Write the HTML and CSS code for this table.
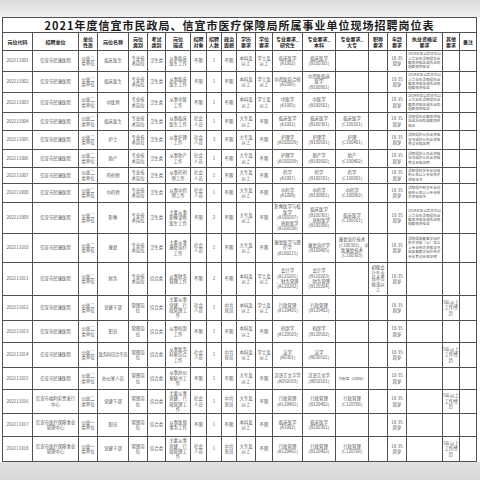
FILE: index.html
```html
<!DOCTYPE html>
<html lang="zh-CN">
<head>
<meta charset="utf-8">
<title>招聘岗位表</title>
<link rel="stylesheet" href="styles.css">
</head>
<body>
<div class="page">
  <div class="top"></div>
  <table class="sheet">
    <colgroup>
      <col class="c30"><col class="c46"><col class="c19"><col class="c31"><col class="c19"><col class="c18"><col class="c25"><col class="c16"><col class="c15"><col class="c15"><col class="c19"><col class="c17"><col class="c30"><col class="c33"><col class="c33"><col class="c19"><col class="c19"><col class="c36"><col class="c17"><col class="c17">
    </colgroup>
    <tr class="h15"><td class="title" colspan="20">2021年度信宜市民政局、信宜市医疗保障局所属事业单位现场招聘岗位表</td></tr>
    <tr class="h18 head">
      <th>岗位代码</th><th>招聘单位</th><th>单位<br>性质</th><th>岗位名称</th><th>岗位<br>类别</th><th>考试<br>类别</th><th>岗位<br>描述</th><th>招聘<br>对象</th><th>招聘<br>人数</th><th>政治<br>面貌</th><th>学历<br>要求</th><th>学位<br>要求</th><th>专业要求_<br>研究生</th><th>专业要求_<br>本科</th><th>专业要求_<br>大专</th><th>职称<br>要求</th><th>年龄<br>要求</th><th>执业资格证<br>要求</th><th>其他<br>要求</th><th>备注</th>
    </tr>
    <tr class="h21">
      <td>202111001</td><td>信宜市民康医院</td><td>公益二<br>类单位</td><td>临床医生</td><td>专业技<br>术岗位</td><td>卫生类</td><td>从事临床<br>医生工作</td><td>不限</td><td>1</td><td>不限</td><td>本科及<br>以上</td><td>学士及<br>以上</td><td>临床医学<br>（A1002）</td><td>临床医学<br>（B100301）</td><td></td><td></td><td>18-35<br>周岁</td><td class="lic">2019年及以后本科以<br>上毕业生须取得执业<br>医师资格证或执业助<br>理医师资格证</td><td></td><td></td>
    </tr>
    <tr class="h21">
      <td>202111002</td><td>信宜市民康医院</td><td>公益二<br>类单位</td><td>临床医生</td><td>专业技<br>术岗位</td><td>卫生类</td><td>从事临床<br>医生工作</td><td>不限</td><td>1</td><td>不限</td><td>本科及<br>以上</td><td>学士及<br>以上</td><td>中西医结合硕<br>（A1006）</td><td>中西医临床<br>医学<br>（B100901）</td><td></td><td></td><td>18-35<br>周岁</td><td class="lic">2019年及以后本科以<br>上毕业生须取得执业<br>医师资格证或执业助<br>理医师资格证</td><td></td><td></td>
    </tr>
    <tr class="h20">
      <td>202111003</td><td>信宜市民康医院</td><td>公益二<br>类单位</td><td>中医师</td><td>专业技<br>术岗位</td><td>卫生类</td><td>从事中医<br>工作</td><td>不限</td><td>1</td><td>不限</td><td>本科及<br>以上</td><td>学士及<br>以上</td><td>中医学<br>（A1005）</td><td>中医学<br>（B100501）</td><td></td><td></td><td>18-35<br>周岁</td><td class="lic">2019年及以后本科以<br>上毕业生须取得执业<br>医师资格证或执业助<br>理医师资格证</td><td></td><td></td>
    </tr>
    <tr class="h18">
      <td>202111004</td><td>信宜市民康医院</td><td>公益二<br>类单位</td><td>临床医生</td><td>专业技<br>术岗位</td><td>卫生类</td><td>从事临床<br>医生工作</td><td>社会<br>人员</td><td>1</td><td>不限</td><td>大专及<br>以上</td><td>不限</td><td>临床医学<br>（A1002）</td><td>临床医学<br>（B100301）</td><td>临床医学<br>（C100101）</td><td></td><td>18-35<br>周岁</td><td class="lic">须取得执业医师资格<br>证或执业助理医师资<br>格证</td><td></td><td></td>
    </tr>
    <tr class="h19">
      <td>202111005</td><td>信宜市民康医院</td><td>公益二<br>类单位</td><td>护士</td><td>专业技<br>术岗位</td><td>卫生类</td><td>从事护理<br>工作</td><td>社会<br>人员</td><td>3</td><td>不限</td><td>大专及<br>以上</td><td>不限</td><td>护理学<br>（A100209）</td><td>护理学<br>（B100501）</td><td>护理<br>（C100401）</td><td></td><td>18-35<br>周岁</td><td class="lic">须取得护士执业资格<br>证书或护士执业资格<br>考试合格证明</td><td></td><td></td>
    </tr>
    <tr class="h18">
      <td>202111006</td><td>信宜市民康医院</td><td>公益二<br>类单位</td><td>助产</td><td>专业技<br>术岗位</td><td>卫生类</td><td>从事助产<br>工作</td><td>社会<br>人员</td><td>1</td><td>不限</td><td>大专及<br>以上</td><td>不限</td><td>护理学<br>（A100209）</td><td>助产学<br>（B100502）</td><td>助产<br>（C100402）</td><td></td><td>18-35<br>周岁</td><td class="lic">须取得护士执业资格<br>证书或护士执业资格<br>考试合格证明</td><td></td><td></td>
    </tr>
    <tr class="h16">
      <td>202111007</td><td>信宜市民康医院</td><td>公益二<br>类单位</td><td>药剂师</td><td>专业技<br>术岗位</td><td>卫生类</td><td>从事药剂<br>师工作</td><td>社会<br>人员</td><td>1</td><td>不限</td><td>大专及<br>以上</td><td>不限</td><td>药学<br>（A1007）</td><td>药学<br>（B100701）</td><td>药学<br>（C100901）</td><td></td><td>18-35<br>周岁</td><td class="lic">须取得药学专业初级<br>药士及以上专业技术<br>资格证书</td><td></td><td></td>
    </tr>
    <tr class="h19">
      <td>202111008</td><td>信宜市民康医院</td><td>公益二<br>类单位</td><td>中药师</td><td>专业技<br>术岗位</td><td>卫生类</td><td>从事中药<br>师工作</td><td>社会<br>人员</td><td>1</td><td>不限</td><td>大专及<br>以上</td><td>不限</td><td>中药学<br>（A1008）</td><td>中药学<br>（B100801）</td><td>中药学<br>（C100902）</td><td></td><td>18-35<br>周岁</td><td class="lic">须取得中药学专业初<br>级药士及以上专业技<br>术资格证书</td><td></td><td></td>
    </tr>
    <tr class="h31">
      <td>202111009</td><td>信宜市民康医院</td><td>公益二<br>类单位</td><td>影像</td><td>专业技<br>术岗位</td><td>卫生类</td><td>主要从事<br>影像诊断<br>医生工作</td><td>不限</td><td>2</td><td>不限</td><td>大专及<br>以上</td><td>不限</td><td>影像医学与核<br>医学<br>（A100207）<br>、放射医学<br>（A100106）</td><td>临床医学<br>（B100301）<br>、放射医学<br>（B100306）</td><td>临床医学<br>（C100101）</td><td></td><td>18-35<br>周岁</td><td class="lic">2019年及以后本科以<br>上毕业生须取得执业<br>医师资格证或执业助<br>理医师资格证</td><td></td><td></td>
    </tr>
    <tr class="h29">
      <td>202111010</td><td>信宜市民康医院</td><td>公益二<br>类单位</td><td>康复</td><td>专业技<br>术岗位</td><td>卫生类</td><td>主要从事<br>康复治疗<br>工作</td><td>社会<br>人员</td><td>1</td><td>不限</td><td>大专及<br>以上</td><td>不限</td><td>康复医学与理<br>疗学<br>（A100215）</td><td>康复治疗学<br>（B100405）</td><td>康复治疗技术<br>（C100301）、中<br>医康复技术<br>（C100303）</td><td></td><td>18-35<br>周岁</td><td class="lic">须取得康复医学治疗<br>技术初级（士）及以<br>上专业技术资格证书<br>或康复医学治疗技术<br>专业考试合格证明</td><td></td><td></td>
    </tr>
    <tr class="h33">
      <td>202111011</td><td>信宜市民康医院</td><td>公益二<br>类单位</td><td>财务</td><td>专业技<br>术岗位</td><td>综合类</td><td>从事财务<br>管理工作</td><td>不限</td><td>2</td><td>不限</td><td>本科及<br>以上</td><td>学士及<br>以上</td><td>会计学<br>（A120201）<br>、财务管理<br>（A120202）</td><td>会计学<br>（B120203）<br>、财务管理<br>（B120204）</td><td></td><td>初级会<br>计专业<br>技术资<br>格或以<br>上</td><td>18-35<br>周岁</td><td></td><td></td><td></td>
    </tr>
    <tr class="h25">
      <td>202111012</td><td>信宜市民康医院</td><td>公益二<br>类单位</td><td>党建干部</td><td>管理岗<br>位</td><td>综合类</td><td>主要从事<br>党建、行<br>政管理工<br>作</td><td>社会<br>人员</td><td>1</td><td>中共<br>党员</td><td>本科及<br>以上</td><td>学士及<br>以上</td><td>行政管理<br>（A120401）</td><td>行政管理<br>（B120402）</td><td></td><td></td><td>18-35<br>周岁</td><td></td><td>5年以上<br>工作经<br>历</td><td></td>
    </tr>
    <tr class="h22">
      <td>202111013</td><td>信宜市民康医院</td><td>公益二<br>类单位</td><td>职员</td><td>管理岗<br>位</td><td>综合类</td><td>从事档案<br>工作</td><td>不限</td><td>1</td><td>不限</td><td>本科及<br>以上</td><td>不限</td><td>档案学<br>（A120503）</td><td>档案学<br>（B120502）</td><td></td><td></td><td>18-35<br>周岁</td><td></td><td></td><td></td>
    </tr>
    <tr class="h25">
      <td>202111014</td><td>信宜市民康医院</td><td>公益二<br>类单位</td><td class="tight">医务科综合专员</td><td>管理岗<br>位</td><td>综合类</td><td>从事医务<br>科室综合<br>工作</td><td>社会<br>人员</td><td>1</td><td>中共<br>党员</td><td>本科及<br>以上</td><td>学士及<br>以上</td><td>法学<br>（A0301）</td><td>法学<br>（B030101）</td><td></td><td></td><td>18-35<br>周岁</td><td></td><td>5年以上<br>工作经<br>历</td><td></td>
    </tr>
    <tr class="h22">
      <td>202111015</td><td>信宜市民康医院</td><td>公益二<br>类单位</td><td>办公室人员</td><td>管理岗<br>位</td><td>综合类</td><td>从事办公<br>室秘书工<br>作</td><td>不限</td><td>1</td><td>不限</td><td>大专及<br>以上</td><td>不限</td><td>汉语言文字学<br>（A050103）</td><td>汉语言文学<br>（B050101）</td><td class="tight small">文秘类（C0502）</td><td></td><td>18-35<br>周岁</td><td></td><td></td><td></td>
    </tr>
    <tr class="h24">
      <td>202111016</td><td>信宜市福利彩票发行<br>中心</td><td>公益二<br>类单位</td><td>党建干部</td><td>管理岗<br>位</td><td>综合类</td><td>主要从事<br>党建、行<br>政管理工<br>作</td><td>社会<br>人员</td><td>1</td><td>中共<br>党员</td><td>大专及<br>以上</td><td>不限</td><td>行政管理<br>（A120401）</td><td>行政管理<br>（B120402）</td><td>行政管理<br>（C120706）</td><td></td><td>18-35<br>周岁</td><td></td><td>5年以上<br>工作经<br>历</td><td></td>
    </tr>
    <tr class="h23">
      <td>202111017</td><td>信宜市医疗保障事业<br>管理中心</td><td>公益一<br>类单位</td><td>职员</td><td>管理岗<br>位</td><td>综合类</td><td>从事医保<br>事务工作</td><td>不限</td><td>1</td><td>不限</td><td>本科及<br>以上</td><td>不限</td><td>临床医学<br>（A1002）</td><td>临床医学<br>（B100301）</td><td></td><td></td><td>18-35<br>周岁</td><td></td><td></td><td></td>
    </tr>
    <tr class="h25">
      <td>202111018</td><td>信宜市医疗保障事业<br>管理中心</td><td>公益一<br>类单位</td><td>党建干部</td><td>管理岗<br>位</td><td>综合类</td><td>主要从事<br>党建、行<br>政管理工<br>作</td><td>社会<br>人员</td><td>1</td><td>中共<br>党员</td><td>大专及<br>以上</td><td>不限</td><td>行政管理<br>（A120401）</td><td>行政管理<br>（B120402）</td><td>行政管理<br>（C120706）</td><td></td><td>18-35<br>周岁</td><td></td><td>5年以上<br>工作经<br>历</td><td></td>
    </tr>
  </table>
  <div class="bottom"></div>
</div>
</body>
</html>
```

FILE: styles.css
```css
html, body {
  margin: 0;
  padding: 0;
  background: #ffffff;
}
.page {
  width: 480px;
  height: 480px;
  overflow: hidden;
  display: flex;
  flex-direction: column;
  font-family: "Noto Sans CJK SC", "Noto Sans", sans-serif;
  color: #555555;
}
.top {
  height: 17px;
  flex: none;
  background: linear-gradient(180deg, #d9d9d9 0%, #e6e6e6 50%, #f0f0f0 100%);
}
.bottom {
  flex: 1;
  background: linear-gradient(180deg, #e2e2e2 0%, #d9d9d9 100%);
}
.sheet {
  margin-left: 2px;
  width: 474px;
  table-layout: fixed;
  border-collapse: collapse;
  background: #fff;
  flex: none;
}
.sheet td, .sheet th {
  border: 1px solid #505050;
  padding: 0;
  text-align: center;
  vertical-align: middle;
  font-size: 4.4px;
  line-height: 5.4px;
  white-space: nowrap;
  overflow: hidden;
  font-weight: 400;
}
.sheet th {
  font-size: 5px;
  line-height: 6px;
  font-weight: 700;
  color: #222;
}
.sheet .title {
  font-family: "Noto Sans CJK SC", "Liberation Serif", serif;
  font-size: 11px;
  line-height: 13px;
  font-weight: 700;
  color: #1a1a1a;
  letter-spacing: 1px;
  overflow: visible;
}
.sheet .lic {
  font-size: 3.6px;
  line-height: 4.4px;
  text-align: left;
  padding-left: 1px;
}
.sheet .tight {
  letter-spacing: -0.3px;
}
.sheet .small {
  font-size: 3.9px;
}
.c15 { width: 15px; }
.c16 { width: 16px; }
.c17 { width: 17px; }
.c18 { width: 18px; }
.c19 { width: 19px; }
.c25 { width: 25px; }
.c30 { width: 30px; }
.c31 { width: 31px; }
.c33 { width: 33px; }
.c36 { width: 36px; }
.c46 { width: 46px; }
.h15 { height: 15px; }
.h16 { height: 16px; }
.h18 { height: 18px; }
.h19 { height: 19px; }
.h20 { height: 20px; }
.h21 { height: 21px; }
.h22 { height: 22px; }
.h23 { height: 23px; }
.h24 { height: 24px; }
.h25 { height: 25px; }
.h29 { height: 29px; }
.h31 { height: 31px; }
.h33 { height: 33px; }
```
